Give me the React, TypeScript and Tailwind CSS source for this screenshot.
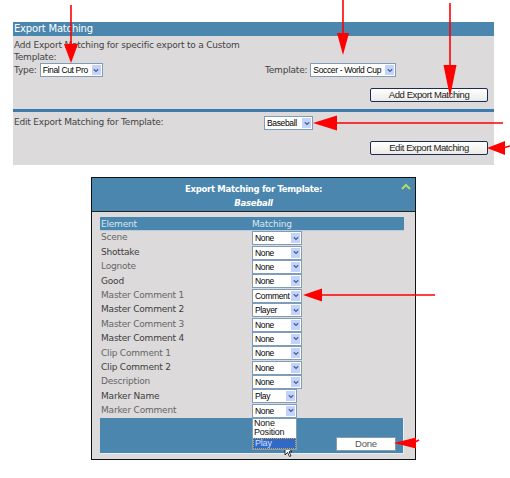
import React from 'react';

const FONT = { fontFamily: '"DejaVu Sans", Tahoma, sans-serif' };
const ARIAL = { fontFamily: '"Liberation Sans", Arial, sans-serif' };

function Select({ value, width }: { value: string; width: string }) {
  return (
    <div className={`flex h-[14px] items-stretch border border-[#7f9db9] bg-white ${width}`} style={ARIAL}>
      <span className="flex-1 overflow-hidden whitespace-nowrap pl-[2px] text-[8.5px] leading-[12px] tracking-[-0.35px] text-black">
        {value}
      </span>
      <span className="m-px flex w-[9px] items-center justify-center bg-[#c3d3fd]">
        <svg width="6" height="5" viewBox="0 0 6 5">
          <path d="M0.8 1.2l2.2 2.2 2.2-2.2" fill="none" stroke="#4d6185" strokeWidth="1.3" />
        </svg>
      </span>
    </div>
  );
}

function XpButton({ label }: { label: string }) {
  return (
    <div
      className="flex h-[14px] w-[118px] items-center justify-center rounded-[2px] border border-[#1c2b54] bg-gradient-to-b from-white to-[#ecebe6] text-[9.5px] tracking-[-0.4px] text-[#222]"
      style={ARIAL}
    >
      {label}
    </div>
  );
}

const rows: { name: string; value: string; narrow?: boolean }[] = [
  { name: 'Scene', value: 'None' },
  { name: 'Shottake', value: 'None' },
  { name: 'Lognote', value: 'None' },
  { name: 'Good', value: 'None' },
  { name: 'Master Comment 1', value: 'Comment' },
  { name: 'Master Comment 2', value: 'Player' },
  { name: 'Master Comment 3', value: 'None' },
  { name: 'Master Comment 4', value: 'None' },
  { name: 'Clip Comment 1', value: 'None' },
  { name: 'Clip Comment 2', value: 'None' },
  { name: 'Description', value: 'None' },
  { name: 'Marker Name', value: 'Play', narrow: true },
  { name: 'Marker Comment', value: 'None', narrow: true },
];

function Arrows() {
  // red annotation arrows drawn over the screenshot
  const red = '#f00';
  return (
    <svg className="pointer-events-none absolute left-0 top-0" width="510" height="478" viewBox="0 0 510 478">
      <line x1="71" y1="5" x2="71" y2="46" stroke={red} strokeWidth="1.6" />
      <polygon points="64,44 78,44 71,63" fill={red} />
      <line x1="343" y1="0" x2="343" y2="35" stroke={red} strokeWidth="1.6" />
      <polygon points="337,33 349,33 343,55" fill={red} />
      <line x1="450" y1="3" x2="450" y2="67" stroke={red} strokeWidth="1.6" />
      <polygon points="443.5,65 456.5,65 450,97" fill={red} />
      <line x1="335" y1="123" x2="503" y2="123" stroke={red} strokeWidth="1.6" />
      <polygon points="313,123 337,115.5 337,130.5" fill={red} />
      <line x1="503" y1="148" x2="510" y2="146" stroke={red} strokeWidth="1.6" />
      <polygon points="487,148 505,141 505,155" fill={red} />
      <line x1="320" y1="295" x2="435" y2="295" stroke={red} strokeWidth="1.4" />
      <polygon points="303,295 322,288.5 322,301.5" fill={red} />
      <line x1="413" y1="443" x2="419" y2="440" stroke={red} strokeWidth="1.4" />
      <polygon points="394,443 416,437.5 416,448.5" fill={red} />
    </svg>
  );
}

export default function App() {
  return (
    <div className="relative h-[478px] w-[510px] overflow-hidden bg-white" style={FONT}>
      {/* Top panel */}
      <div className="ml-[13px] mt-[22px] w-[481px] bg-[#dcdadb] text-[9px] tracking-[-0.2px] text-[#444]">
        <div className="h-[14px] bg-[#4a86ae] pl-[1px] text-[10px] leading-[14px] text-white">Export Matching</div>
        <div className="px-[1px] pt-[3px] leading-[12px]">
          <div>Add Export Matching for specific export to a Custom</div>
          <div>Template:</div>
          <div className="flex items-center">
            <div className="flex w-[251px] items-center gap-[3px]">
              <span>Type:</span>
              <Select value="Final Cut Pro" width="w-[63px]" />
            </div>
            <div className="flex items-center gap-[3px]">
              <span>Template:</span>
              <Select value="Soccer - World Cup" width="w-[86px]" />
            </div>
          </div>
          <div className="mt-[11px] flex pl-[356px]">
            <XpButton label="Add Export Matching" />
          </div>
        </div>
        <div className="mt-[7px] h-[3px] bg-[#3b7bb0]" />
        <div className="px-[1px] pt-[4px]">
          <div className="flex items-center">
            <span className="w-[250px]">Edit Export Matching for Template:</span>
            <Select value="Baseball" width="w-[49px]" />
          </div>
          <div className="mt-[11px] flex pb-[10px] pl-[356px]">
            <XpButton label="Edit Export Matching" />
          </div>
        </div>
      </div>

      {/* Dialog */}
      <div className="ml-[91px] mt-[12px] w-[325px] border border-[#111] bg-[#dcdadb]">
        <div className="relative h-[34px] border-b border-[#222] bg-[#4a86ae] pt-[4px] text-center text-[8.5px] font-bold leading-[14px] tracking-[-0.3px] text-white">
          <div>Export Matching for Template:</div>
          <div className="italic">Baseball</div>
          <svg className="absolute right-[4px] top-[5px]" width="10" height="8" viewBox="0 0 10 8">
            <path d="M1 6l4-4 4 4" fill="none" stroke="#b9d86a" strokeWidth="2" />
          </svg>
        </div>
        <div className="pb-[5px] pl-[8px] pr-[11px] pt-[5px] text-[9px] tracking-[-0.2px]">
          <div className="flex h-[14px] items-center border-b border-[#b7cde0] bg-[#4a86ae] leading-[14px] text-[#dbe7f2]">
            <span className="w-[152px] pl-[1px]">Element</span>
            <span>Matching</span>
          </div>
          {rows.map((r, i) => (
            <div key={r.name} className="flex h-[14.4px] items-center">
              <span className={`w-[152px] pl-[1px] ${i % 2 ? 'text-[#3e3e3e]' : 'text-[#666]'}`}>{r.name}</span>
              <div className="relative">
                <Select value={r.value} width={r.narrow ? 'w-[45px]' : 'w-[50px]'} />
                {r.name === 'Marker Comment' && (
                  <div
                    className="absolute left-0 top-[14px] z-10 w-[45px] border border-[#7f9db9] bg-white text-[9px] leading-[9.5px] tracking-[-0.2px]"
                    style={ARIAL}
                  >
                    <div className="px-[1px] text-[#111]">None</div>
                    <div className="px-[1px] text-[#111]">Position</div>
                    <div className="border border-dotted border-[#e0a040] bg-[#316ac5] px-[1px] text-[#cfe0ff]">Play</div>
                  </div>
                )}
              </div>
            </div>
          ))}
          <div className="flex h-[36px] items-end justify-end border-b border-r border-[#e8eef4] bg-[#4a86ae] pb-[2px] pr-[7px]">
            <div
              className="flex h-[14px] w-[60px] items-center justify-center border border-[#8a9aa8] bg-white text-[9.5px] text-[#555]"
              style={ARIAL}
            >
              Done
            </div>
          </div>
        </div>
      </div>

      {/* mouse cursor */}
      <svg className="pointer-events-none absolute left-[284px] top-[444px]" width="9" height="14" viewBox="0 0 9 14">
        <path d="M1 1v10l2.5-2.5 2 4 1.5-.7-2-4H8z" fill="#fff" stroke="#000" strokeWidth="0.8" />
      </svg>

      <Arrows />
    </div>
  );
}
